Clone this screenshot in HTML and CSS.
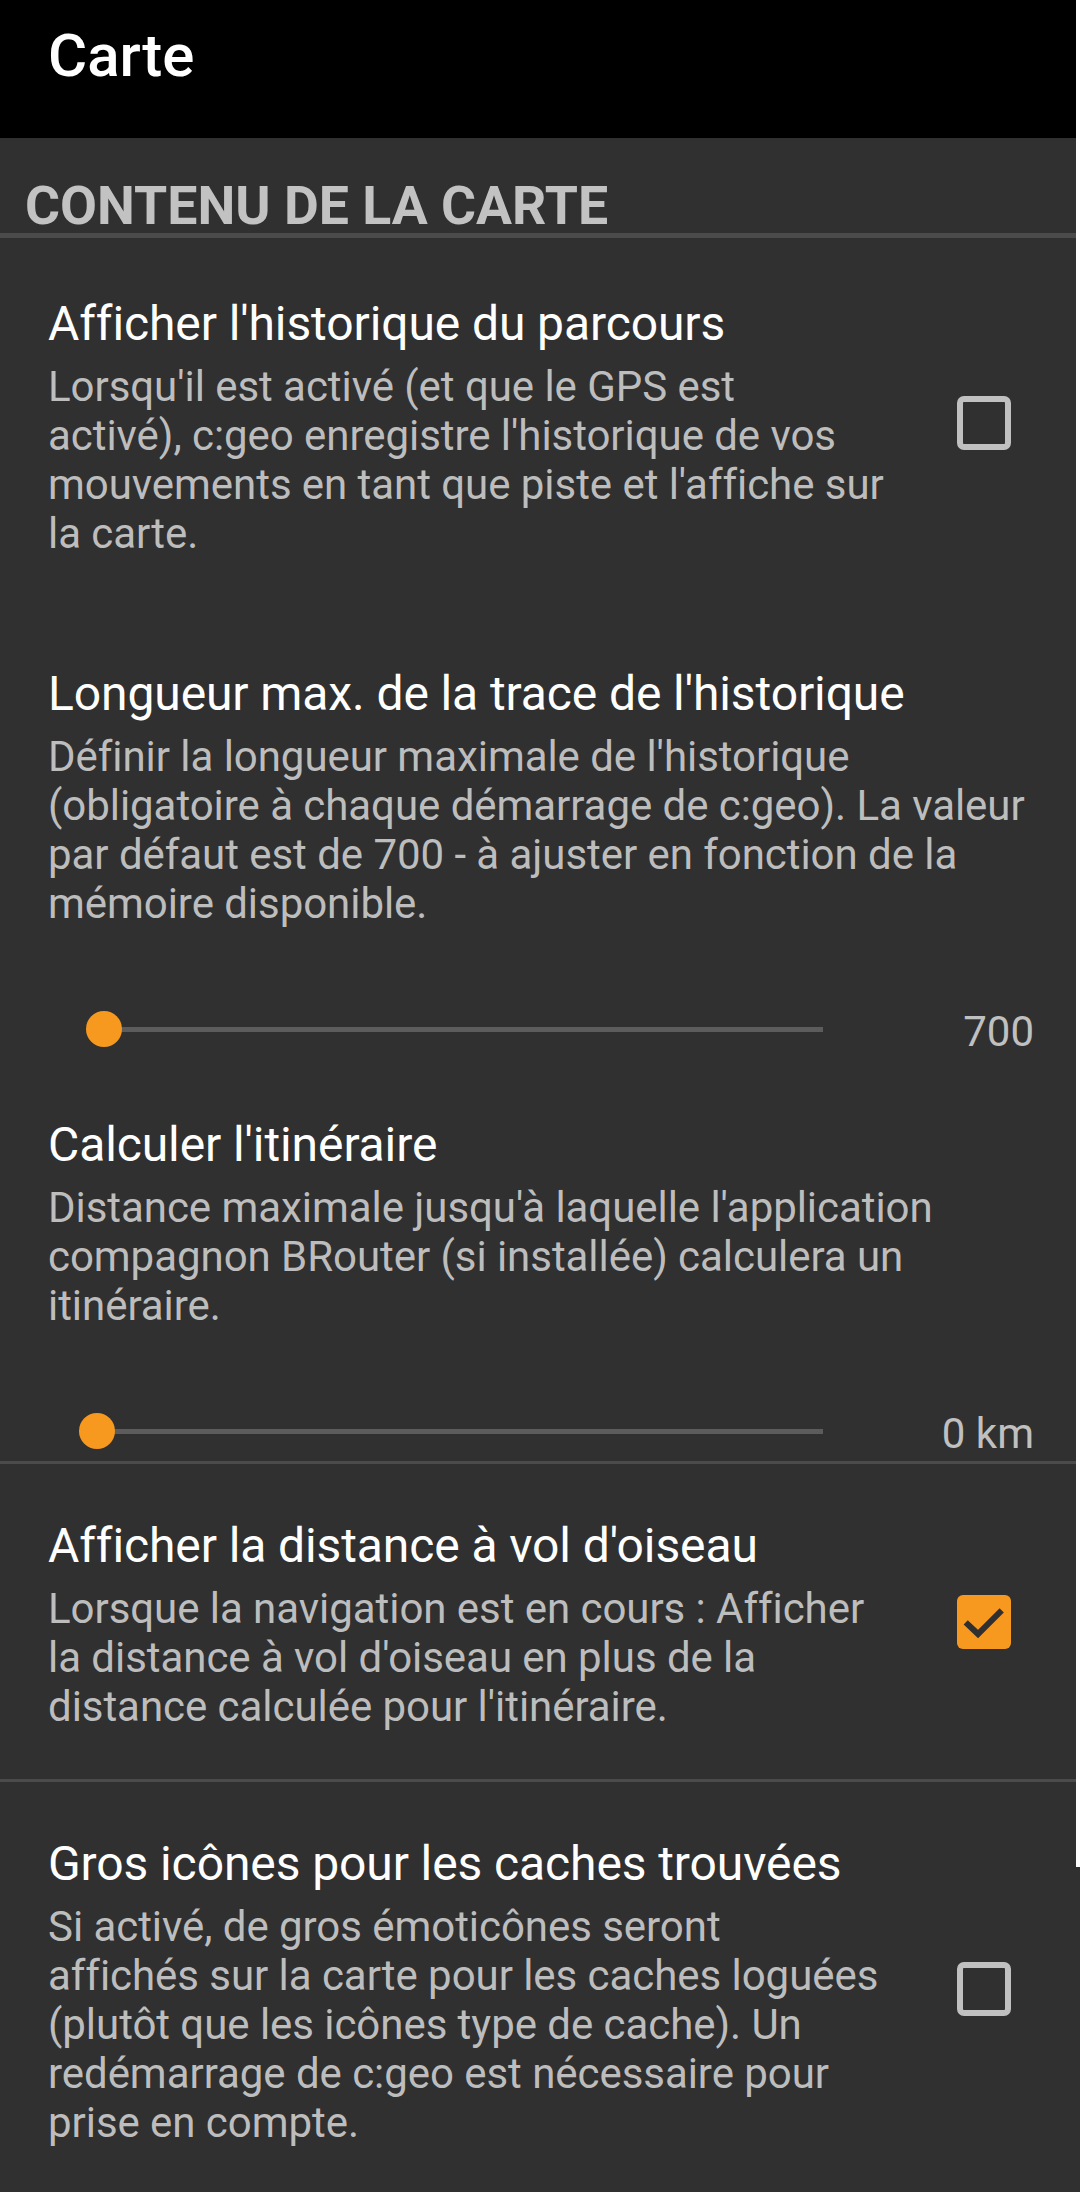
FILE: index.html
```html
<!DOCTYPE html>
<html lang="fr">
<head>
<meta charset="utf-8">
<title>Carte</title>
<link rel="stylesheet" href="styles.css">
</head>
<body>
<header class="toolbar">
  <h1 class="toolbar-title">Carte</h1>
</header>

<div class="category">CONTENU DE LA CARTE</div>

<main class="list">
  <section class="pref">
    <div class="pref-text">
      <div class="pref-title">Afficher l'historique du parcours</div>
      <div class="pref-summary">Lorsqu'il est activé (et que le GPS est<br>activé), c:geo enregistre l'historique de vos<br>mouvements en tant que piste et l'affiche sur<br>la carte.</div>
    </div>
    <div class="widget">
      <svg class="checkbox" viewBox="0 0 18 18" width="54" height="54"><rect x="1" y="1" width="16" height="16" rx="1.3" fill="none" stroke="#c0c0c0" stroke-width="2"/></svg>
    </div>
  </section>

  <section class="pref pref--seek">
    <div class="pref-text">
      <div class="pref-title">Longueur max. de la trace de l'historique</div>
      <div class="pref-summary">Définir la longueur maximale de l'historique<br>(obligatoire à chaque démarrage de c:geo). La valeur<br>par défaut est de 700 - à ajuster en fonction de la<br>mémoire disponible.</div>
      <div class="seek">
        <div class="seek-track"><span class="seek-thumb" style="left: 8px"></span></div>
        <span class="seek-value">700</span>
      </div>
    </div>
  </section>

  <section class="pref pref--seek">
    <div class="pref-text">
      <div class="pref-title">Calculer l'itinéraire</div>
      <div class="pref-summary">Distance maximale jusqu'à laquelle l'application<br>compagnon BRouter (si installée) calculera un<br>itinéraire.</div>
      <div class="seek">
        <div class="seek-track"><span class="seek-thumb" style="left: 1px"></span></div>
        <span class="seek-value">0 km</span>
      </div>
    </div>
  </section>

  <section class="pref pref--split">
    <div class="pref-text">
      <div class="pref-title">Afficher la distance à vol d'oiseau</div>
      <div class="pref-summary">Lorsque la navigation est en cours : Afficher<br>la distance à vol d'oiseau en plus de la<br>distance calculée pour l'itinéraire.</div>
    </div>
    <div class="widget">
      <svg class="checkbox" viewBox="0 0 18 18" width="54" height="54"><rect x="0" y="0" width="18" height="18" rx="2" fill="#f7991f"/><polyline points="2.9,9.1 7,13 14.9,5.1" fill="none" stroke="#303030" stroke-width="2"/></svg>
    </div>
  </section>

  <section class="pref pref--split">
    <div class="pref-text">
      <div class="pref-title">Gros icônes pour les caches trouvées</div>
      <div class="pref-summary">Si activé, de gros émoticônes seront<br>affichés sur la carte pour les caches loguées<br>(plutôt que les icônes type de cache). Un<br>redémarrage de c:geo est nécessaire pour<br>prise en compte.</div>
    </div>
    <div class="widget">
      <svg class="checkbox" viewBox="0 0 18 18" width="54" height="54"><rect x="1" y="1" width="16" height="16" rx="1.3" fill="none" stroke="#c0c0c0" stroke-width="2"/></svg>
    </div>
  </section>
</main>

<div class="scroll-edge"></div>
</body>
</html>
```

FILE: styles.css
```css
html {
  background: #303030;
}

body {
  margin: 0;
  position: relative;
  min-height: 2192px;
  background: #303030;
  font-family: Roboto, "Noto Sans", "Liberation Sans", sans-serif;
  color: #ffffff;
}

.toolbar {
  box-sizing: border-box;
  height: 138px;
  padding: 21px 0 0 48px;
  background: #000000;
}

.toolbar-title {
  margin: 0;
  font-size: 60px;
  line-height: 70px;
  font-weight: 500;
  color: #ffffff;
}

.category {
  box-sizing: border-box;
  height: 100px;
  padding: 36px 25px 0;
  border-bottom: 5px solid #4b4b4b;
  font-size: 53.6px;
  line-height: 63px;
  font-weight: 700;
  color: #c2c2c2;
  white-space: nowrap;
}

.list {
  display: flex;
  flex-direction: column;
}

.pref {
  display: flex;
  align-items: center;
}

.pref-text {
  flex: 1;
  min-width: 0;
  padding: 58px 0 50px 48px;
}

.pref--split {
  border-top: 3px solid #4b4b4b;
}

.pref--split .pref-text {
  padding-top: 54px;
  padding-bottom: 48px;
}

.pref--seek .pref-text {
  padding-bottom: 0;
  padding-right: 46px;
}

.pref-title {
  font-size: 48px;
  line-height: 56px;
  letter-spacing: -0.1px;
  color: #ffffff;
  white-space: nowrap;
}

.pref-summary {
  margin-top: 10px;
  font-size: 42px;
  line-height: 49px;
  letter-spacing: -0.05px;
  color: #bdbdbd;
  white-space: nowrap;
}

.widget {
  flex: none;
  display: flex;
  align-items: center;
  margin-right: 69px;
  margin-left: 24px;
}

.checkbox {
  display: block;
}

.seek {
  display: flex;
  align-items: center;
  height: 60px;
  margin-top: 71px;
}

.seek-track {
  position: relative;
  width: 727px;
  height: 5px;
  margin-left: 48px;
  background: #5c5c5c;
}

.seek-thumb {
  position: absolute;
  top: 50%;
  width: 36px;
  height: 36px;
  border-radius: 50%;
  background: #f7991f;
  transform: translate(-50%, -50%);
}

.seek-value {
  margin-left: auto;
  padding-top: 4px;
  font-size: 42px;
  line-height: 49px;
  color: #c0c0c0;
}

.scroll-edge {
  position: absolute;
  top: 0;
  right: 0;
  width: 4px;
  height: 1867px;
  background: #ffffff;
}
```
